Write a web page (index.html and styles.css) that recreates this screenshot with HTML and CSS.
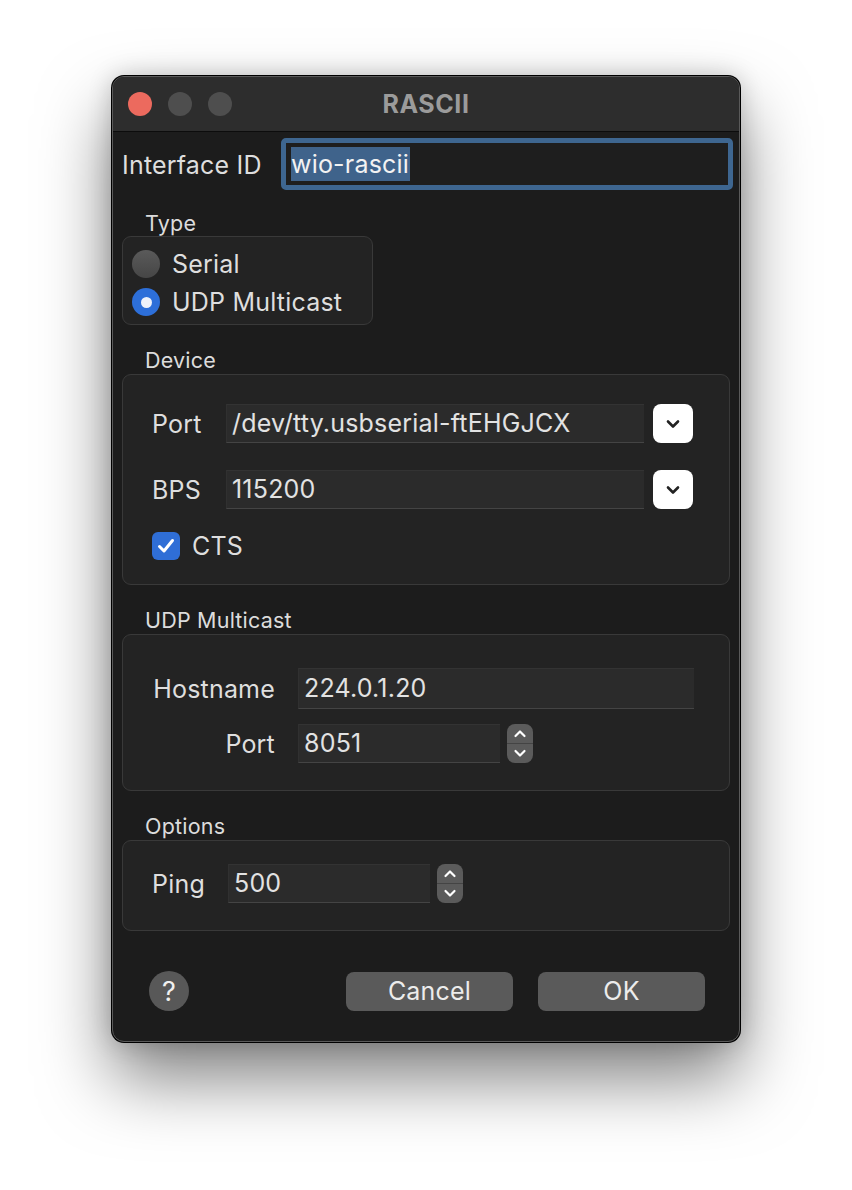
FILE: index.html
```html
<!DOCTYPE html>
<html lang="en">

<head>
    <meta charset="UTF-8">
    <meta name="viewport" content="width=device-width, initial-scale=1.0">
    <title>RASCII</title>
    <link rel="stylesheet" href="styles.css">
</head>

<body>
    <div class="window">
        <div class="titlebar">
            <div class="lights">
                <span class="light close"></span>
                <span class="light"></span>
                <span class="light"></span>
            </div>
            <div class="title">RASCII</div>
        </div>
        <div class="content">
            <div class="id-row">
                <div class="id-label">Interface ID</div>
                <div class="focus-ring">
                    <div class="id-input"><span class="selected">wio-rascii</span></div>
                </div>
            </div>

            <div class="section-title">Type</div>
            <div class="group type-group">
                <div class="radio-row">
                    <span class="radio"></span>
                    <span>Serial</span>
                </div>
                <div class="radio-row">
                    <span class="radio on"></span>
                    <span>UDP Multicast</span>
                </div>
            </div>

            <div class="section-title">Device</div>
            <div class="group device-group">
                <div class="row">
                    <div class="label device-label">Port</div>
                    <div class="field combo">/dev/tty.usbserial-ftEHGJCX</div>
                    <div class="drop-btn">
                        <svg width="14" height="10" viewBox="0 0 14 10"><path d="M2 2.5 L7 7.5 L12 2.5" fill="none" stroke="#222" stroke-width="2.6" stroke-linecap="round" stroke-linejoin="round"/></svg>
                    </div>
                </div>
                <div class="row">
                    <div class="label device-label">BPS</div>
                    <div class="field combo">115200</div>
                    <div class="drop-btn">
                        <svg width="14" height="10" viewBox="0 0 14 10"><path d="M2 2.5 L7 7.5 L12 2.5" fill="none" stroke="#222" stroke-width="2.6" stroke-linecap="round" stroke-linejoin="round"/></svg>
                    </div>
                </div>
                <div class="check-row">
                    <span class="checkbox">
                        <svg width="20" height="18" viewBox="0 0 20 18"><path d="M3.5 9.5 L8 14 L16.5 3.5" fill="none" stroke="#fff" stroke-width="3" stroke-linecap="round" stroke-linejoin="round"/></svg>
                    </span>
                    <span>CTS</span>
                </div>
            </div>

            <div class="section-title">UDP Multicast</div>
            <div class="group udp-group">
                <div class="row">
                    <div class="label udp-label">Hostname</div>
                    <div class="field host">224.0.1.20</div>
                </div>
                <div class="row">
                    <div class="label udp-label">Port</div>
                    <div class="field num">8051</div>
                    <div class="stepper">
                        <svg width="26" height="39" viewBox="0 0 26 39"><path d="M8.5 12 L13 7.5 L17.5 12" fill="none" stroke="#fff" stroke-width="2.2" stroke-linecap="round" stroke-linejoin="round"/><line x1="0" y1="19.5" x2="26" y2="19.5" stroke="#444" stroke-width="1"/><path d="M8.5 27 L13 31.5 L17.5 27" fill="none" stroke="#fff" stroke-width="2.2" stroke-linecap="round" stroke-linejoin="round"/></svg>
                    </div>
                </div>
            </div>

            <div class="section-title">Options</div>
            <div class="group options-group">
                <div class="row">
                    <div class="label ping-label">Ping</div>
                    <div class="field num">500</div>
                    <div class="stepper">
                        <svg width="26" height="39" viewBox="0 0 26 39"><path d="M8.5 12 L13 7.5 L17.5 12" fill="none" stroke="#fff" stroke-width="2.2" stroke-linecap="round" stroke-linejoin="round"/><line x1="0" y1="19.5" x2="26" y2="19.5" stroke="#444" stroke-width="1"/><path d="M8.5 27 L13 31.5 L17.5 27" fill="none" stroke="#fff" stroke-width="2.2" stroke-linecap="round" stroke-linejoin="round"/></svg>
                    </div>
                </div>
            </div>

            <div class="footer">
                <div class="help">?</div>
                <div class="buttons">
                    <div class="button">Cancel</div>
                    <div class="button">OK</div>
                </div>
            </div>
        </div>
    </div>
</body>

</html>
```

FILE: styles.css
```css
* {
    box-sizing: border-box;
}

body {
    margin: 0;
    padding: 76px 0 148px 112px;
    background: #fff;
    font-family: Inter, Roboto, "Liberation Sans", sans-serif;
    color: #dedede;
    letter-spacing: 0.2px;
}

.window {
    width: 628px;
    height: 966px;
    background: #1c1c1c;
    border: 1px solid #5a5a5a;
    border-radius: 12px;
    box-shadow: 0 0 0 1px #000, 0 36px 70px rgba(0, 0, 0, 0.5), 0 0 24px rgba(0, 0, 0, 0.2);
    overflow: hidden;
}

.titlebar {
    height: 55px;
    background: #2d2d2d;
    border-bottom: 1px solid #0c0c0c;
    display: flex;
    align-items: center;
    position: relative;
}

.lights {
    display: flex;
    gap: 16px;
    padding-left: 15px;
}

.light {
    width: 24px;
    height: 24px;
    border-radius: 50%;
    background: #4e4e4e;
}

.light.close {
    background: #ec6a5e;
}

.title {
    position: absolute;
    left: 0;
    right: 0;
    text-align: center;
    font-size: 25px;
    font-weight: bold;
    letter-spacing: 0.6px;
    color: #9b9b9b;
}

.content {
    padding: 6px 9px 0 9px;
}

.id-row {
    display: flex;
    align-items: center;
    margin-right: -3px;
}

.id-label {
    width: 159px;
    font-size: 25px;
    padding-top: 2px;
}

.focus-ring {
    flex: 1;
    height: 52px;
    border: 5px solid #3e6690;
    border-radius: 5px;
}

.id-input {
    height: 100%;
    background: #1e1e1e;
    padding: 4px 5px;
    font-size: 25px;
    line-height: 34px;
}

.selected {
    background: #3f638b;
    color: #f2f2f2;
    display: inline-block;
    padding-right: 1px;
}

.section-title {
    font-size: 21.5px;
    line-height: 26px;
    margin: 20px 0 0 23px;
    color: #dcdcdc;
}

.device-group + .section-title,
.udp-group + .section-title,
.type-group + .section-title {
    margin-top: 22px;
}

.group {
    background: #232323;
    border: 1px solid #393939;
    border-radius: 9px;
    font-size: 25px;
}

.type-group {
    width: 251px;
    height: 89px;
    padding: 8px 0 0 9px;
}

.radio-row {
    display: flex;
    align-items: center;
    gap: 12px;
    height: 38px;
}

.radio {
    width: 28px;
    height: 28px;
    border-radius: 50%;
    background: linear-gradient(#5a5a5a, #464646);
}

.radio.on {
    background: #2d6fd9;
    display: flex;
    align-items: center;
    justify-content: center;
}

.radio.on::after {
    content: "";
    width: 11px;
    height: 11px;
    border-radius: 50%;
    background: #eef2fa;
}

.device-group {
    height: 211px;
    margin-top: 1px;
    padding: 29px 0 0 29px;
}

.udp-group {
    height: 157px;
    margin-top: 1px;
    padding: 33px 0 0 29px;
}

.options-group {
    height: 91px;
    margin-top: 1px;
    padding: 23px 0 0 29px;
}

.row {
    display: flex;
    align-items: center;
    gap: 7px;
    margin-bottom: 27px;
}

.udp-group .row {
    margin-bottom: 15px;
}

.label {
    flex: none;
}

.device-label {
    width: 67px;
}

.udp-label {
    width: 123px;
    text-align: right;
    margin-right: 16px;
}

.ping-label {
    width: 69px;
}

.field {
    height: 39px;
    background: #2b2b2b;
    border-top: 1px solid #333;
    border-left: 1px solid #303030;
    border-bottom: 1px solid #444;
    padding: 0 5px;
    line-height: 37px;
    font-size: 25px;
    color: #e2e2e2;
}

.combo {
    width: 418px;
    margin-right: 2px;
}

.host {
    width: 396px;
    height: 41px;
    line-height: 39px;
}

.num {
    width: 202px;
}

.drop-btn {
    width: 40px;
    height: 39px;
    background: #fff;
    border-radius: 8px;
    display: flex;
    align-items: center;
    justify-content: center;
}

.stepper {
    width: 26px;
    height: 39px;
    background: #5b5b5b;
    border-radius: 8px;
    overflow: hidden;
    display: flex;
}

.check-row {
    display: flex;
    align-items: center;
    gap: 12px;
    margin-top: -5px;
}

.checkbox {
    width: 28px;
    height: 28px;
    border-radius: 6px;
    background: #2f6ed6;
    display: flex;
    align-items: center;
    justify-content: center;
}

.footer {
    display: flex;
    align-items: center;
    margin-top: 40px;
    padding-left: 27px;
}

.help {
    width: 40px;
    height: 40px;
    border-radius: 50%;
    background: #585858;
    color: #f0f0f0;
    font-size: 27px;
    display: flex;
    align-items: center;
    justify-content: center;
}

.buttons {
    display: flex;
    gap: 25px;
    margin-left: auto;
    margin-right: 25px;
}

.button {
    width: 167px;
    height: 39px;
    background: #5a5a5a;
    border-radius: 8px;
    font-size: 25px;
    line-height: 39px;
    text-align: center;
    color: #ececec;
}
```
